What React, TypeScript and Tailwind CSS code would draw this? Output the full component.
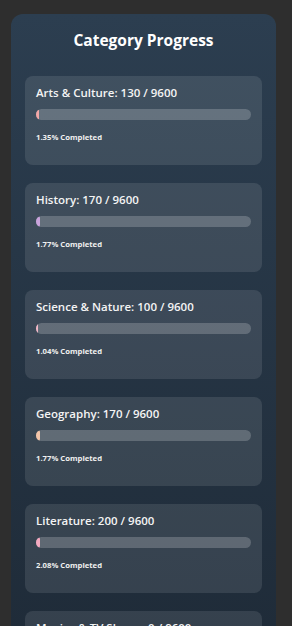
const categories = [
  { name: "Arts & Culture", done: 130, color: "bg-[#f2a7a7]" },
  { name: "History", done: 170, color: "bg-[#c9a3dc]" },
  { name: "Science & Nature", done: 100, color: "bg-[#f3b8c8]" },
  { name: "Geography", done: 170, color: "bg-[#f2c4a8]" },
  { name: "Literature", done: 200, color: "bg-[#f4a9c0]" },
  { name: "Movies & TV Shows", done: 0, color: "bg-[#a8d8f0]" },
  { name: "Music", done: 0, color: "bg-[#b8e0b0]" },
  { name: "Sports", done: 0, color: "bg-[#f0d890]" },
];

const TOTAL = 9600;

export default function App() {
  return (
    <div className="min-h-screen bg-[#2e2e2e] pt-[14px] font-['Open_Sans','Noto_Sans',sans-serif]">
      <div className="ml-[11px] w-[265px] rounded-[12px] bg-gradient-to-b from-[#2c3e50] to-[#19232e] px-[14px] pt-[14px] pb-6">
        <h2 className="text-center text-[15.5px] font-bold leading-[24px] text-white">Category Progress</h2>
        <div className="mt-[24px] flex flex-col gap-[18px]">
          {categories.map((c) => {
            const pct = (c.done / TOTAL) * 100;
            return (
              <div key={c.name} className="h-[89px] rounded-[8px] bg-white/10 px-[11px] pt-[8px]">
                <div className="text-[11.5px] font-semibold leading-[18px] text-[#f4f4f4]">
                  {c.name}: {c.done} / {TOTAL}
                </div>
                <div className="mt-[7px] h-[11px] w-full overflow-hidden rounded-full bg-white/20">
                  <div className={`h-full rounded-full ${c.color}`} style={{ width: `${pct}%` }} />
                </div>
                <div className="mt-[11px] text-[7.7px] font-bold leading-[12px] text-[#f0f0f0]">
                  {pct.toFixed(2)}% Completed
                </div>
              </div>
            );
          })}
        </div>
      </div>
    </div>
  );
}
